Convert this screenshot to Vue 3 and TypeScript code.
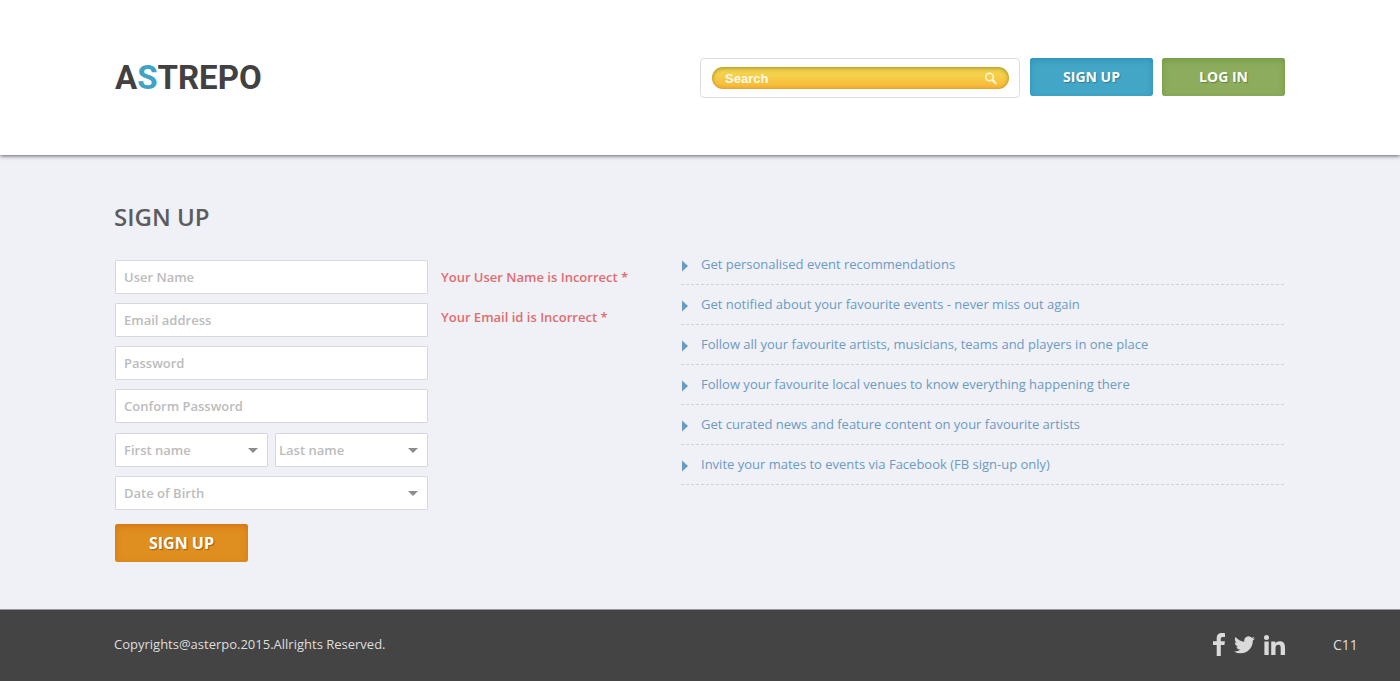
<script setup lang="ts">
import { ref } from 'vue'

interface TextField {
  id: string
  label: string
  type: string
  error?: string
}

const fields: TextField[] = [
  { id: 'user-name', label: 'User Name', type: 'text', error: 'Your User Name is Incorrect *' },
  { id: 'email', label: 'Email address', type: 'email', error: 'Your Email id is Incorrect *' },
  { id: 'password', label: 'Password', type: 'password' },
  { id: 'confirm', label: 'Conform Password', type: 'password' },
]

const errors = fields.filter((field) => field.error)

const benefits: string[] = [
  'Get personalised event recommendations',
  'Get notified about your favourite events - never miss out again',
  'Follow all your favourite artists, musicians, teams and players in one place',
  'Follow your favourite local venues to know everything happening there',
  'Get curated news and feature content on your favourite artists',
  'Invite your mates to events via Facebook (FB sign-up only)',
]

const values = ref<Record<string, string>>({})
const query = ref('')
</script>

<template>
  <div class="page">
    <header class="header">
      <div class="container header-row">
        <a class="logo" href="#">A<span class="logo-accent">S</span>TREPO</a>
        <div class="tools">
          <form class="search" role="search" @submit.prevent>
            <div class="search-pill">
              <input v-model="query" class="search-input" type="search" placeholder="Search" aria-label="Search" />
              <button class="search-button" type="submit" aria-label="Submit search">
                <svg width="13" height="13" viewBox="0 0 13 13" fill="none" stroke="currentColor">
                  <circle cx="5.5" cy="5" r="3.8" stroke-width="1.5" />
                  <path d="M8.500 8L11.600 11.300" stroke-width="2.200" stroke-linecap="round" />
                </svg>
              </button>
            </div>
          </form>
          <button class="button button-blue" type="button">SIGN UP</button>
          <button class="button button-green" type="button">LOG IN</button>
        </div>
      </div>
    </header>

    <main class="container main">
      <section class="signup">
        <h1 class="title">SIGN UP</h1>
        <div class="signup-body">
          <form class="form" @submit.prevent>
            <input
              v-for="field in fields"
              :id="field.id"
              :key="field.id"
              v-model="values[field.id]"
              class="control"
              :type="field.type"
              :placeholder="field.label"
              :aria-label="field.label"
              :aria-describedby="field.error ? field.id + '-error' : undefined"
            />
            <div class="name-row">
              <span class="select-wrap">
                <select class="control" aria-label="First name"><option>First name</option></select>
                <svg class="caret" width="10" height="5" viewBox="0 0 10 5"><path d="M0 0H10L5 5Z" fill="currentColor" /></svg>
              </span>
              <span class="select-wrap">
                <select class="control control-tight" aria-label="Last name"><option>Last name</option></select>
                <svg class="caret" width="10" height="5" viewBox="0 0 10 5"><path d="M0 0H10L5 5Z" fill="currentColor" /></svg>
              </span>
            </div>
            <span class="select-wrap">
              <select class="control" aria-label="Date of Birth"><option>Date of Birth</option></select>
              <svg class="caret" width="10" height="5" viewBox="0 0 10 5"><path d="M0 0H10L5 5Z" fill="currentColor" /></svg>
            </span>
            <button class="button button-orange" type="submit">SIGN UP</button>
          </form>
          <div class="errors">
            <p v-for="field in errors" :id="field.id + '-error'" :key="field.id" class="error">{{ field.error }}</p>
          </div>
        </div>
      </section>

      <ul class="benefits">
        <li v-for="benefit in benefits" :key="benefit" class="benefit">
          <svg class="marker" width="6" height="12" viewBox="0 0 6 12"><path d="M0 0.5L6 6L0 11.5Z" fill="currentColor" /></svg>
          <a class="benefit-link" href="#">{{ benefit }}</a>
        </li>
      </ul>
    </main>

    <footer class="footer">
      <div class="footer-inner">
        <p class="copyright">Copyrights@asterpo.2015.Allrights Reserved.</p>
        <nav class="social" aria-label="Social media">
          <a href="#" aria-label="Facebook">
            <svg width="12" height="23" viewBox="0 0 12 23"><path d="M12 0.2V3.9H9.8C8.2 3.9 7.8 4.7 7.8 5.8V8.2H11.9L11.4 12.1H7.8V23H3.7V12.1H0V8.2H3.7V5.2C3.7 1.8 5.8 0 8.8 0C10.3 0 11.5 0.1 12 0.2Z" fill="currentColor" /></svg>
          </a>
          <a href="#" aria-label="Twitter">
            <svg width="21" height="18" viewBox="0 0 24 20"><path d="M24 2.4c-.9.4-1.8.7-2.8.8 1-.6 1.8-1.6 2.2-2.7-1 .6-2 1-3.1 1.2A4.9 4.9 0 0 0 11.9 6.200C7.800 6 4.200 4 1.700.9.400 3.100 1 6.100 3.200 7.500c-.8 0-1.600-.2-2.200-.6-.1 2.300 1.600 4.400 3.900 4.900-.7.2-1.500.2-2.200.1.600 2 2.400 3.400 4.600 3.400A9.900 9.900 0 0 1 0 17.300a13.900 13.900 0 0 0 7.500 2.200c9.100 0 14.300-7.700 14-14.600 1-.7 1.800-1.600 2.500-2.500Z" fill="currentColor" /></svg>
          </a>
          <a href="#" aria-label="LinkedIn">
            <svg width="21" height="20" viewBox="0 0 21 20" fill="currentColor"><circle cx="2.500" cy="2.500" r="2.500" /><path d="M0.400 6.500H4.700V20H0.400ZM7.200 6.500H11.300V8.400C12 7.200 13.400 6.200 15.500 6.200C19.900 6.200 21 8.900 21 12.300V20H16.700V13.200C16.700 11.500 16.500 9.800 14.400 9.800C12.100 9.800 11.500 11.500 11.500 13.200V20H7.200Z" /></svg>
          </a>
        </nav>
      </div>
      <span class="code">C11</span>
    </footer>
  </div>
</template>

<style>
body {
  margin: 0;
}
</style>

<style scoped>
.page {
  display: flex;
  flex-direction: column;
  min-height: 100vh;
  background: #f0f1f7;
  font-family: 'Open Sans', 'Noto Sans', sans-serif;
  font-size: 13px;
}

.container {
  box-sizing: border-box;
  width: 100%;
  max-width: 1170px;
  margin: 0 auto;
}

.header {
  background: #fff;
  padding: 58px 0 57px;
  box-shadow: 0 1px 4px rgba(0, 0, 0, 0.6);
}

.header-row {
  display: flex;
  align-items: flex-start;
  justify-content: space-between;
}

.logo {
  color: #414141;
  font-family: Roboto, sans-serif;
  font-size: 33px;
  font-weight: 700;
  line-height: 40px;
  text-decoration: none;
}

.logo-accent {
  color: #40a3c5;
}

.tools {
  display: flex;
  align-items: flex-start;
}

.search {
  box-sizing: border-box;
  width: 320px;
  margin-right: 10px;
  padding: 8px 10px 8px 11px;
  border: 1px solid #dedede;
  border-radius: 4px;
}

.search-pill {
  box-sizing: border-box;
  display: flex;
  align-items: center;
  height: 22px;
  padding: 1px 12px 0 13px;
  border-radius: 11px;
  background: linear-gradient(#f1d54d, #f5d04a 40%, #fab437);
  box-shadow: inset 0 1px 4px rgba(110, 90, 0, 0.6);
}

.search-input {
  flex: 1;
  min-width: 0;
  padding: 0;
  border: 0;
  outline: 0;
  appearance: none;
  background: none;
  color: #fff;
  font: 700 13px/20px 'Liberation Sans', Arial, sans-serif;
}

.search-input::placeholder {
  color: #fffbe9;
  opacity: 1;
}

.search-button {
  display: flex;
  padding: 0;
  border: 0;
  background: none;
  color: #fff6d8;
}

.button {
  width: 123px;
  height: 38px;
  padding: 0 0 1px;
  border: 0;
  border-radius: 3px;
  color: #fff;
  font-family: inherit;
  font-size: 14px;
  font-weight: 700;
  cursor: pointer;
}

.button-blue {
  margin-right: 9px;
  background: #43a6c7;
  box-shadow: inset 0 2px 6px #2f8fb6;
  text-shadow: 1px 1px 1px #2b7c98;
}

.button-green {
  background: #8dac5d;
  box-shadow: inset 0 2px 6px #6f9842;
  text-shadow: 1px 1px 1px #64833a;
}

.button-orange {
  width: 133px;
  margin-top: 5px;
  padding: 0;
  background: #de8f1f;
  box-shadow: inset 0 2px 6px #d57214;
  text-shadow: 1px 1px 1px #a85c08;
  font-size: 16px;
}

.main {
  display: grid;
  flex: 1;
  grid-template-columns: 1fr minmax(0, 603px);
  align-items: start;
  padding: 42px 1px 47px 0;
}

.title {
  margin: 0 0 23px -1px;
  color: #5c5c5c;
  font-size: 24px;
  font-weight: 600;
  line-height: 40px;
}

.signup-body {
  display: flex;
  gap: 13px;
}

.form {
  display: flex;
  flex-direction: column;
  gap: 9px;
  width: 313px;
}

.control {
  box-sizing: border-box;
  width: 100%;
  height: 34px;
  padding: 0 8px;
  border: 1px solid #d8d8dc;
  border-radius: 1px;
  outline: 0;
  appearance: none;
  background: #fff;
  color: #bcbcbc;
  font-family: inherit;
  font-size: 13px;
  font-weight: 600;
}

.control::placeholder {
  color: #bcbcbc;
  opacity: 1;
}

.control-tight {
  padding-left: 3px;
}

.name-row {
  display: grid;
  grid-template-columns: 1fr 1fr;
  gap: 7px;
  margin-top: 1px;
}

.select-wrap {
  position: relative;
  display: block;
}

.caret {
  position: absolute;
  top: 15px;
  right: 10px;
  color: #8c8c8c;
  pointer-events: none;
}

.errors {
  padding-top: 7px;
}

.error {
  margin: 0 0 20px;
  color: #e06c6e;
  font-weight: 600;
  line-height: 20px;
}

.benefits {
  margin: 48px 0 0;
  padding: 0;
  list-style: none;
}

.benefit {
  display: flex;
  align-items: center;
  gap: 13px;
  padding-left: 1px;
  border-bottom: 1px dashed #d2d3d6;
}

.marker {
  margin-top: 2px;
  color: #6b9ac3;
}

.benefit-link {
  color: #6b9ac3;
  line-height: 39px;
  text-decoration: none;
}

.footer {
  box-sizing: border-box;
  display: grid;
  grid-template-columns: 1fr minmax(0, 1170px) 1fr;
  align-items: center;
  height: 72px;
  padding-bottom: 2px;
  border-top: 1px solid #98999b;
  background: #444;
  color: #dedede;
}

.footer-inner {
  display: flex;
  grid-column: 2;
  align-items: center;
  justify-content: space-between;
}

.copyright {
  margin: 0 0 0 -1px;
  padding-bottom: 2px;
}

.social {
  display: flex;
  align-items: center;
  gap: 9px;
}

.social a {
  display: flex;
  color: #dadada;
}

.code {
  padding-left: 48px;
  font-size: 14px;
}
</style>
